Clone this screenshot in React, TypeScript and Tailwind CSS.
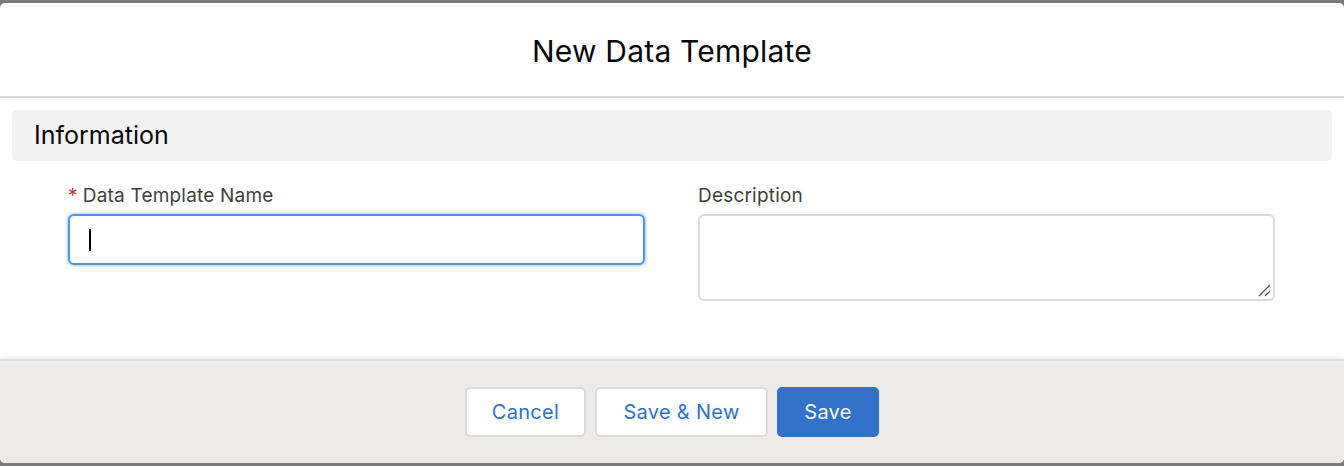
import React from "react";

const font = { fontFamily: "Inter, 'Noto Sans', Arial, sans-serif" };

export default function App() {
  return (
    <div className="h-[466px] w-[1344px] bg-[#7a7a7a] pt-[3px] pb-[3px]" style={font}>
      <div className="flex h-full flex-col overflow-hidden rounded-[5px] bg-white">
        {/* header */}
        <div className="flex h-[95px] shrink-0 items-center justify-center border-b-2 border-[#dddbda] pt-[2px]">
          <h1 className="text-[30px] tracking-[0.2px] leading-none text-[#080707]">New Data Template</h1>
        </div>

        {/* body */}
        <div className="flex-1 px-[12px] pt-[12px]">
          <div className="flex h-[51px] items-center rounded-[5px] bg-[#f3f2f2] pl-[22px]">
            <span className="text-[25px] text-[#080707]">Information</span>
          </div>

          <div className="grid grid-cols-2 gap-x-[53px] pl-[56px] pr-[57px] pt-[23px]">
            <div>
              <label className="flex h-[24px] items-center text-[19px] tracking-[0.2px] text-[#3e3e3c]">
                <span className="mr-[5px] text-[#c23934]">*</span>
                Data Template Name
              </label>
              <div className="mt-[6px] flex h-[51px] items-center rounded-[6px] border-2 border-[#4a94f0] bg-white pl-[19px] shadow-[0_0_3px_1px_rgba(74,148,240,0.45)]">
                <span className="h-[22px] w-[2px] bg-black" />
              </div>
            </div>
            <div>
              <label className="flex h-[24px] items-center text-[19px] tracking-[0.2px] text-[#3e3e3c]">Description</label>
              <div className="relative mt-[6px] h-[87px] rounded-[6px] border-2 border-[#dddbda] bg-white">
                <svg className="absolute bottom-[2px] right-[2px]" width="14" height="14" viewBox="0 0 14 14">
                  <path d="M2 13 L13 2" stroke="#555" strokeWidth="1.3" />
                  <path d="M8 13 L13 8" stroke="#555" strokeWidth="1.3" />
                </svg>
              </div>
            </div>
          </div>
        </div>

        {/* footer */}
        <div className="flex h-[104px] shrink-0 items-center justify-center gap-[9px] border-t-2 border-[#dcdcdc] bg-[#ecebea] shadow-[0_-2px_3px_rgba(0,0,0,0.06)]">
          <button className="h-[50px] w-[121px] rounded-[5px] border-2 border-[#dddbda] bg-white text-[20px] tracking-[0.3px] text-[#2f6fd0]">
            Cancel
          </button>
          <button className="h-[50px] w-[173px] rounded-[5px] border-2 border-[#dddbda] bg-white text-[20px] tracking-[0.3px] text-[#2f6fd0]">
            Save &amp; New
          </button>
          <button className="h-[50px] w-[102px] rounded-[5px] bg-[#3272cd] text-[20px] tracking-[0.3px] text-white">
            Save
          </button>
        </div>
      </div>
    </div>
  );
}
